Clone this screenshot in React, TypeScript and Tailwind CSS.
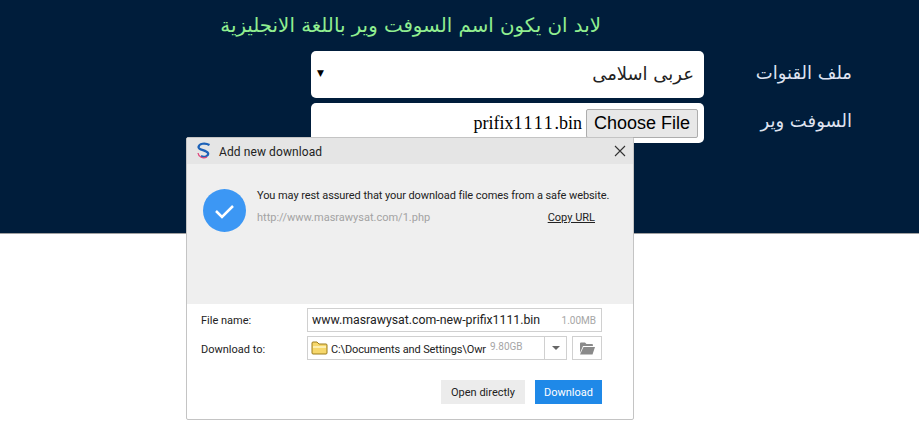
export default function App() {
  const arabic = "font-['DejaVu_Sans','Noto_Sans',sans-serif]";
  return (
    <div className="relative h-[423px] w-[919px] overflow-hidden bg-white font-['Roboto',sans-serif]">
      <header className="flex h-[234px] flex-col border-b border-[#a0a0a0] bg-[#001d3b]">
        <h1 dir="rtl" className={`${arabic} ml-[220px] mt-[10px] h-[31px] w-[381px] text-[19.8px] leading-[31px] font-normal whitespace-nowrap text-[#90ee90]`}>لابد ان يكون اسم السوفت وير باللغة الانجليزية</h1>
        <div className="mt-[10px] ml-[311px] flex h-[47px] items-center">
          <div dir="rtl" className={`${arabic} relative flex h-[47px] w-[393px] items-center rounded-[5px] bg-white pr-[10px] pb-[2px] text-[18px] text-[#222]`}>
            عربى اسلامى
            <span className="absolute left-[6px] top-[16px] font-['DejaVu_Sans',sans-serif] text-[9px] text-black">▼</span>
          </div>
          <span dir="rtl" className={`${arabic} ml-[56px] w-[92px] pb-[4px] text-[18px] whitespace-nowrap text-[#dfe3f0]`}>ملف القنوات</span>
        </div>
        <div className="mt-[5px] ml-[311px] flex h-[40px] items-center">
          <div className="flex h-[40px] w-[393px] items-center justify-end rounded-[5px] bg-white pr-[6px]">
            <span className="mr-[4px] font-['Liberation_Serif',serif] text-[18px] text-black">prifix<span className="tracking-[1.75px]">1111</span>.bin</span>
            <button className="h-[29px] w-[112px] rounded-[2px] border border-[#adadad] bg-[#e8e8e8] font-['Liberation_Sans',sans-serif] text-[18px] text-black">Choose File</button>
          </div>
          <span dir="rtl" className={`${arabic} ml-[56px] w-[92px] pb-[6px] text-[18px] whitespace-nowrap text-[#dfe3f0]`}>السوفت وير</span>
        </div>
      </header>

      <section className="absolute left-[186px] top-[137px] flex h-[283px] w-[448px] flex-col overflow-hidden rounded-[2px] border border-[#c4c4c4] bg-white text-[11px] text-[#222]">
        <div className="flex h-[26px] shrink-0 items-center bg-[#e5e5e5] pl-[9px] pr-[7px]">
          <svg width="16" height="18" viewBox="0 0 16 18" fill="none">
            <path d="M13.5 3C9 .5 3 1.500 2.500 5c-.4 3 8 3 9.500 6 1 2.300-3 5-7 3" stroke="#1d62b8" strokeWidth="2.200" />
            <path d="M2 11c.5 4 5 6 9 4" stroke="#e0457b" strokeWidth="1.300" />
          </svg>
          <span className="ml-[7px] pt-[2px] text-[12px] tracking-[0.1px]">Add new download</span>
          <svg className="ml-auto" width="12" height="12" viewBox="0 0 12 12" stroke="#333" strokeWidth="1.100">
            <path d="M1 1l10 10M11 1L1 11" />
          </svg>
        </div>
        <div className="flex h-[140px] shrink-0 items-start bg-[#efefef] pl-[16px] pt-[25px]">
          <svg width="43" height="43" viewBox="0 0 43 43">
            <circle cx="21.500" cy="21.500" r="21.500" fill="#3c97f4" />
            <path d="M13 22l6 6 11-11" fill="none" stroke="#fff" strokeWidth="2.500" />
          </svg>
          <div className="ml-[11px] -mt-[1px] flex w-[353px] flex-col">
            <p className="whitespace-nowrap leading-[16px] tracking-[-0.08px]">You may rest assured that your download file comes from a safe website.</p>
            <div className="mt-[6px] flex items-center leading-[16px]">
              <span className="text-[#a3a3a3]">http://www.masrawysat.com/1.php</span>
              <span className="ml-auto mr-[15px] underline">Copy URL</span>
            </div>
          </div>
        </div>
        <div className="flex flex-col pl-[14px] pr-[31px]">
          <div className="mt-[4px] flex h-[24px] items-center">
            <span className="w-[106px] pt-[2px]">File name:</span>
            <div className="flex h-[24px] flex-1 items-center border border-[#d0d0d0] pl-[4px] pr-[5px]">
              <span className="text-[12.300px] whitespace-nowrap text-[#222]">www.masrawysat.com-new-prifix1111.bin</span>
              <span className="ml-auto text-[10px] text-[#a6a6a6]">1.00MB</span>
            </div>
          </div>
          <div className="mt-[4px] flex h-[24px] items-center">
            <span className="w-[106px] pt-[4px]">Download to:</span>
            <div className="flex h-[24px] w-[260px] items-center border border-[#d0d0d0]">
              <svg className="ml-[3px] shrink-0" width="17" height="14" viewBox="0 0 17 14">
                <path d="M1 3V2c0-.6.4-1 1-1h4l2 2h7c.6 0 1 .4 1 1v8c0 .6-.4 1-1 1H2c-.6 0-1-.4-1-1z" fill="#f6d76b" stroke="#9c7c1c" />
                <path d="M2 5h13v2H2z" fill="#fcefb0" />
              </svg>
              <span className="ml-[3px] mt-[5px] w-[156px] shrink-0 text-[11px] tracking-[-0.12px] whitespace-nowrap">C:\Documents and Settings\Owr</span>
              <span className="mb-[3px] ml-[3px] shrink-0 text-[10px] text-[#a6a6a6]">9.80GB</span>
              <span className="ml-auto flex h-full w-[22px] shrink-0 items-center justify-center border-l border-[#d0d0d0]">
                <span className="h-0 w-0 border-x-[4px] border-t-[4px] border-x-transparent border-t-[#666]" />
              </span>
            </div>
            <div className="ml-[5px] flex h-[24px] w-[30px] items-center justify-center border border-[#d0d0d0]">
              <svg width="16" height="13" viewBox="0 0 16 13" fill="#8a8a8a">
                <path d="M1 3V1.500C1 1 1.400.6 2 .6h4l1.500 1.400H13c.5 0 .9.400.9 1V4H4L1 11z" />
                <path d="M4.500 5H16l-2.500 7.500H1z" />
              </svg>
            </div>
          </div>
          <div className="mt-[20px] flex justify-end gap-[10px]">
            <button className="h-[24px] w-[84px] bg-[#ececec] pt-[2px] text-[11px] text-[#222]">Open directly</button>
            <button className="h-[24px] w-[67px] bg-[#1f89e8] pt-[2px] text-[11px] text-white">Download</button>
          </div>
        </div>
      </section>
    </div>
  );
}
